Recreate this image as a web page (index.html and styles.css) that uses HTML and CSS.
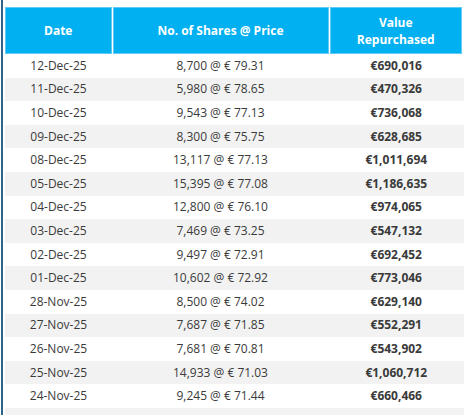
FILE: index.html
```html
<!DOCTYPE html>
<html lang="en">
<head>
    <meta charset="UTF-8">
    <title>Share Buyback</title>
    <link rel="stylesheet" href="styles.css">
</head>
<body>
    <div class="frame">
        <table class="buyback">
            <colgroup>
                <col class="col-date">
                <col class="col-shares">
                <col class="col-value">
            </colgroup>
            <thead>
                <tr>
                    <th>Date</th>
                    <th>No. of Shares @ Price</th>
                    <th>Value<br>Repurchased</th>
                </tr>
            </thead>
            <tbody>
                <tr><td>12-Dec-25</td><td>8,700 @ € 79.31</td><td class="value">€690,016</td></tr>
                <tr><td>11-Dec-25</td><td>5,980 @ € 78.65</td><td class="value">€470,326</td></tr>
                <tr><td>10-Dec-25</td><td>9,543 @ € 77.13</td><td class="value">€736,068</td></tr>
                <tr><td>09-Dec-25</td><td>8,300 @ € 75.75</td><td class="value">€628,685</td></tr>
                <tr><td>08-Dec-25</td><td>13,117 @ € 77.13</td><td class="value">€1,011,694</td></tr>
                <tr><td>05-Dec-25</td><td>15,395 @ € 77.08</td><td class="value">€1,186,635</td></tr>
                <tr><td>04-Dec-25</td><td>12,800 @ € 76.10</td><td class="value">€974,065</td></tr>
                <tr><td>03-Dec-25</td><td>7,469 @ € 73.25</td><td class="value">€547,132</td></tr>
                <tr><td>02-Dec-25</td><td>9,497 @ € 72.91</td><td class="value">€692,452</td></tr>
                <tr><td>01-Dec-25</td><td>10,602 @ € 72.92</td><td class="value">€773,046</td></tr>
                <tr><td>28-Nov-25</td><td>8,500 @ € 74.02</td><td class="value">€629,140</td></tr>
                <tr><td>27-Nov-25</td><td>7,687 @ € 71.85</td><td class="value">€552,291</td></tr>
                <tr><td>26-Nov-25</td><td>7,681 @ € 70.81</td><td class="value">€543,902</td></tr>
                <tr><td>25-Nov-25</td><td>14,933 @ € 71.03</td><td class="value">€1,060,712</td></tr>
                <tr><td>24-Nov-25</td><td>9,245 @ € 71.44</td><td class="value">€660,466</td></tr>
                <tr><td></td><td></td><td></td></tr>
            </tbody>
        </table>
    </div>
</body>
</html>
```

FILE: styles.css
```css
body {
    margin: 0;
    background: #fff;
    font-family: "Open Sans", "Liberation Sans", sans-serif;
    color: #3a3a3a;
    overflow: hidden;
}
.frame {
    margin-left: 1px;
    border-left: 2px solid #2c6585;
    padding: 7px 0 0 2px;
    height: 420px;
    box-sizing: border-box;
}
.buyback {
    width: 460px;
    border-collapse: collapse;
    table-layout: fixed;
    font-size: 12px;
}
.col-date {
    width: 107px;
}
.col-shares {
    width: 217px;
}
.buyback th {
    height: 47px;
    padding: 0;
    background: #00b0f0;
    color: #fff;
    font-weight: bold;
    line-height: 17px;
    box-shadow: inset 0 0 0 1px #5fcbf3;
    border-right: 1px solid #fff;
}
.buyback th:last-child {
    border-right: 3px solid #fff;
}
.buyback td {
    height: 23.6px;
    padding: 0;
    text-align: center;
    line-height: 16px;
}
.buyback tbody tr:nth-child(even) td {
    background: #f2f2f2;
}
.buyback td.value {
    font-weight: bold;
}
```
